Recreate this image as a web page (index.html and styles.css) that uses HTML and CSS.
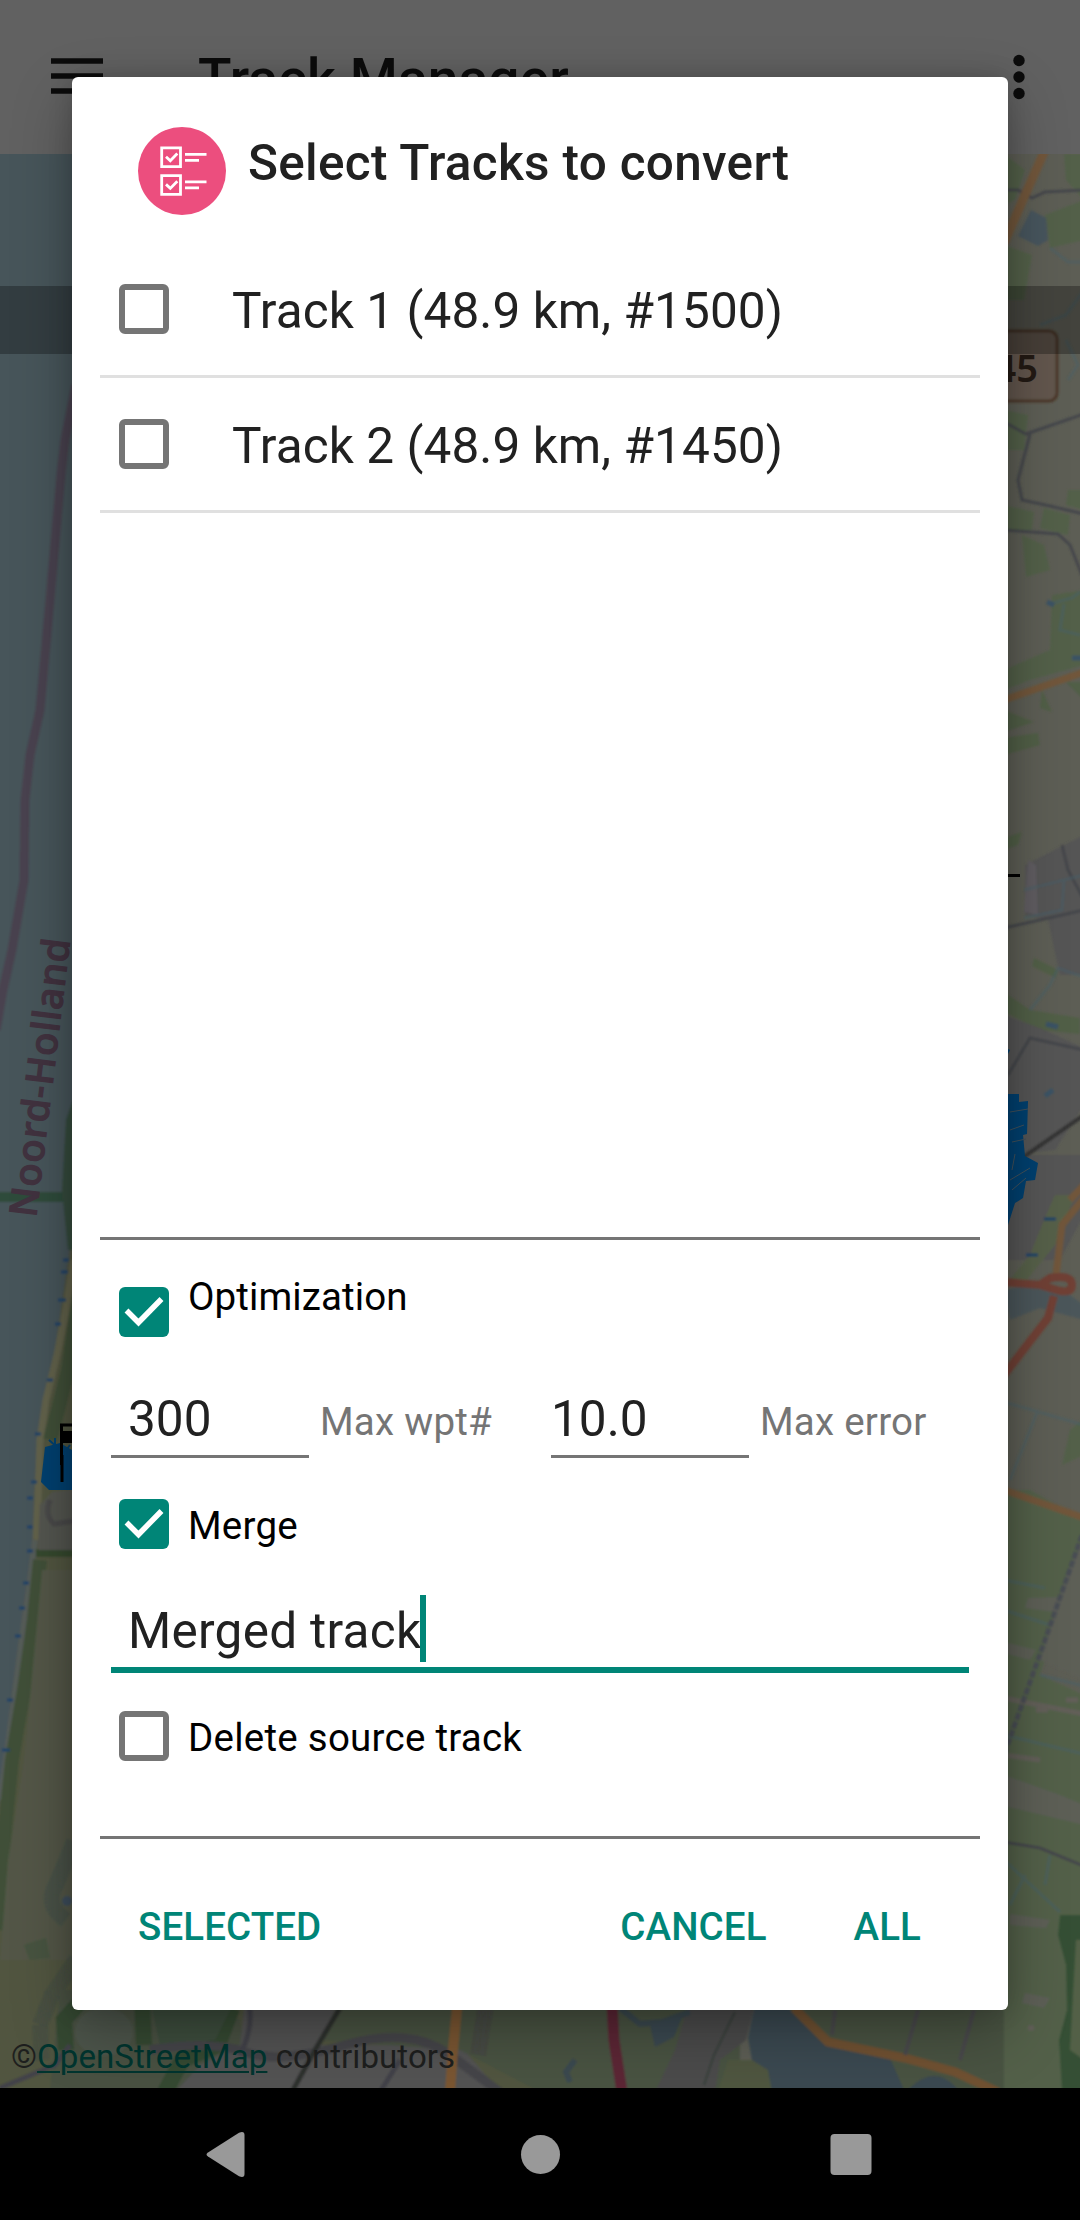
FILE: index.html
```html
<!DOCTYPE html>
<html lang="en">
<head>
<meta charset="utf-8">
<title>Track Manager</title>
<link rel="stylesheet" href="styles.css">
</head>
<body>
<div class="screen">
  <div class="app">
    <header class="appbar">
      <svg class="menu-icon" viewBox="0 0 52 36"><path d="M0 3h52M0 18h52M0 33h52"/></svg>
      <h1 class="app-title">Track Manager</h1>
      <svg class="more-icon" viewBox="0 0 12 46"><circle cx="6" cy="6.5" r="5.7"/><circle cx="6" cy="23" r="5.7"/><circle cx="6" cy="39.5" r="5.7"/></svg>
    </header>
    <div class="map">
      <svg class="map-canvas" viewBox="0 154 1080 1934">
        <defs><filter id="soft" x="-5%" y="-5%" width="110%" height="110%"><feGaussianBlur stdDeviation="1.3"/></filter></defs>
        <rect y="154" width="1080" height="1934" fill="#5d5e55"/>
        <g filter="url(#soft)" fill="none">
          <!-- sea and coast -->
          <path fill="#46545a" d="M-5 150H90V1230L70 1250 64 1290 55 1350 43 1400 38 1440 34 1500 33 1550 27 1590 20 1640 10 1720 3 1780-5 1830z"/>
          <path fill="#51553f" d="M80 1230L70 1250 64 1290 55 1350 43 1400 38 1440 34 1500 33 1550 27 1590 20 1640 10 1720 3 1780-5 1830V2100H600V1230z"/>
          <path stroke="#62624c" stroke-width="7" d="M74 1260L66 1310 57 1355 46 1400 40 1440 38 1500 36 1540"/>
          <path stroke="#555b58" stroke-width="6" d="M35 1540L28 1595 21 1645 10 1730 0 1800"/>
          <path stroke="#405038" stroke-width="14" d="M80 1290L68 1370 58 1410 50 1440M40 1560L34 1620 24 1690 12 1760 4 1840-4 1930"/>
          <path stroke="#34492f" stroke-width="8" d="M36 1553H80"/>
          <path fill="#535450" d="M52 1492L80 1488V1550H38L40 1505z"/>
          <path stroke="#484948" stroke-width="5" d="M80 1520L54 1524Q44 1515 50 1500"/>
          <path fill="#525747" d="M42 1570H80V1960H0L8 1860 24 1760z"/>
          <path stroke="#2f4b3b" stroke-width="10" d="M-2 1197H66"/>
          <path fill="#344b3d" d="M80 1080L66 1120 62 1190 68 1250H80z"/>
          <path stroke="#49434f" stroke-width="9" d="M76 385L65 440 61 475 50 600 40 710 30 755 25 800 24 880 12 950 3 990-4 1030"/>
          <path stroke="#424c46" stroke-width="16" stroke-dasharray="2 1" opacity=".75" d="M74 1842L56 1885Q44 1905 66 1920M76 1960L52 1995 40 2025 42 2060"/>
          <ellipse cx="67" cy="1901" rx="5" ry="5" fill="#3c4e5c"/>
          <path fill="#46523f" d="M24 1945L46 1938 50 1958 30 1960z"/>
          <!-- land behind the bottom edge of the dialog -->
          <path fill="#485143" d="M60 1990H180L240 2020 250 2090H50z"/>
          <path stroke="#344a32" stroke-width="16" d="M82 2000L64 2020 66 2050M142 2000L144 2045M232 2008L218 2045 182 2060 165 2092"/>
          <ellipse cx="104" cy="2032" rx="29" ry="24" fill="#4e554b"/>
          <path fill="#3c4e3e" d="M150 2000H235L215 2040 160 2045z"/>
          <path fill="#525253" d="M245 2000H340L320 2045H460L500 2092H175L200 2065 240 2045z"/>
          <path fill="#4a5342" d="M340 2000H740V2092H540L460 2050 320 2040z"/>
          <path stroke="#454549" stroke-width="9" d="M150 2050Q210 2040 245 2052T345 2045 450 2055L500 2092"/>
          <path stroke="#424248" stroke-width="5" d="M248 2000Q255 2025 240 2055M0 2088L55 2065 70 2045M400 2060L380 2092"/>
          <path stroke="#2f302f" stroke-width="5" d="M340 2008L315 2050 293 2090"/>
          <path stroke="#7a5730" stroke-width="10" d="M457 2008L453 2050 450 2092"/>
          <path stroke="#454745" stroke-width="16" stroke-dasharray="2 1" d="M486 2005L478 2055"/>
          <path stroke="#5c2635" stroke-width="11" d="M612 2005L614 2040 622 2092"/>
          <path fill="#4c4c4b" d="M688 2005H755L746 2040 720 2060 715 2092H655L675 2050z"/>
          <path stroke="#3e4241" stroke-width="3" d="M735 2012L714 2055 704 2085"/>
          <path fill="#4f5640" d="M728 2060H780V2092H718z"/>
          <path stroke="#3b4a50" stroke-width="6" d="M620 2008L640 2024 662 2022 690 2012M575 2060L566 2072 570 2082"/>
          <path fill="#4a5342" d="M780 2000H1010V2092H880z"/>
          <path fill="#3b4a51" d="M650 2025L683 2015 674 2037 655 2047zM755 2005H785L825 2045 890 2058 905 2092H772L768 2070 752 2060 748 2038z"/>
          <path fill="#3b4a51" d="M906 2092Q935 2060 960 2092z"/>
          <path stroke="#6f5130" stroke-width="9" d="M794 2008L828 2042 905 2058 955 2072 998 2092"/>
          <path stroke="#484a4c" stroke-width="4" d="M918 2010L905 2055M974 2010L960 2060M835 2010L832 2035"/>
          <!-- fields, villages and roads on the east side -->
          <path fill="#53614a" d="M1004 154L1025 170 1015 200 1004 205zM1064 154H1084V200L1066 180zM1045 215L1084 200V240L1050 248zM1004 245L1032 255 1024 300H1004zM1004 410L1028 415 1024 450H1004zM1068 490H1084V510L1066 505zM1004 505L1034 512 1032 530H1004zM1044 508L1070 515 1068 535 1040 528zM1022 535L1044 545 1050 570 1026 577zM1052 595L1084 590V665L1030 680 1004 690V670L1050 650z"/>
          <path fill="#515f46" d="M1004 710L1034 722 1004 732zM1042 690L1052 712 1040 708zM1066 682H1084V700zM1004 738L1038 733 1040 745 1004 755zM1004 838L1022 832 1018 845 1004 850zM1034 958L1058 970 1056 978 1032 966zM1004 992L1030 1010 1080 1018V1034L1040 1030 1004 1012z"/>
          <path fill="#555555" d="M1025 865L1084 835V975H1060L1048 920 1025 915zM1004 1015L1040 1028 1084 1048V1105L1055 1150 1004 1155zM1004 1155H1084V1215L1060 1260H1004z"/>
          <path fill="#5f5c60" d="M1028 860L1036 865 1038 915 1024 912z"/>
          <path fill="#57614a" d="M1044 1220L1055 1195 1075 1195 1055 1245 1025 1282H1008L1030 1255z"/>
          <path fill="#4c565a" d="M1004 1290L1030 1285 1070 1295 1084 1305V1320L1040 1308 1010 1320z"/>
          <path fill="#53614a" d="M1070 1430L1084 1418V1455L1062 1465zM1004 1490H1030L1084 1520V1650L1045 1660 1040 1675 1084 1695V2092H1004z"/>
          <path fill="#5d5f57" d="M1084 1540L1068 1570 1040 1660 1084 1680zM1028 1598L1060 1597 1055 1612 1025 1608zM1004 1642L1036 1650 1030 1660 1004 1653zM1004 1775L1060 1795 1084 1805V1825L1030 1812 1004 1806zM1010 1914L1050 1920 1046 1928 1010 1925zM1025 1993L1050 1998 1044 2008 1022 2003z"/>
          <path stroke="#625e59" stroke-width="5" d="M1004 1698L1084 1714M1004 1755L1040 1760M1036 1710H1048M1066 1700H1078M1028 2028H1034"/>
          <path fill="#355035" d="M1060 1915H1084V2092H1062L1059 2040 1067 2010 1066 1965 1058 1935z"/>
          <path fill="#526047" d="M1076 1940H1084V2060L1070 2050z"/>
          <path stroke="#45464b" stroke-width="3" d="M1004 190H1018L1032 198 1045 192 1084 190M1004 422L1026 434 1084 414M1030 434L1018 480 1022 500 1050 506 1084 514M1004 530L1058 534 1070 545 1084 580M1004 928L1040 920 1084 910M1062 845L1068 870 1084 900M1008 1075L1030 1038 1084 1050M1004 1842L1040 1848 1084 1866"/>
          <path stroke="#486069" stroke-width="3" opacity=".5" d="M1050 248L1068 262 1084 262M1066 340L1078 365 1068 380M1040 325L1066 315 1084 290M1050 604L1072 598 1080 592M1064 604L1060 630 1080 635M1024 890L1084 875M1064 880L1062 910 1024 918M1084 977L1058 968 1050 985 1030 1010M1004 1402L1084 1425M1038 1410L1010 1480M1004 1610L1050 1625M1040 1675L1084 1686M1004 1735L1084 1754M1004 1860L1060 1912M1025 1875L1010 1905M1050 1855L1045 1885M1004 1580L1045 1588"/>
          <path fill="#46555d" d="M1031 210L1046 218 1048 240 1038 246 1018 236z"/>
          <path stroke="#3b5265" stroke-width="5" d="M1047 602L1054 605M1072 658H1084M1046 1024L1058 1027M1045 1096L1053 1090"/>
          <path stroke="#71563a" stroke-width="9" d="M1045 150L1025 195 1004 243"/>
          <path stroke="#71563a" stroke-width="7" d="M1004 700L1084 672M1004 1490L1084 1518M1056 1275L1062 1225 1084 1198M1070 1200L1084 1185"/>
          <path stroke="#703f34" stroke-width="8" d="M1004 1282L1040 1285 1050 1278Q1072 1274 1072 1285T1050 1288L1040 1285M1054 1296L1048 1318 1004 1375"/>
          <path stroke="#343434" stroke-width="4" d="M1022 1158L1084 1115"/>
          <path stroke="#494d52" stroke-width="5" stroke-dasharray="7 2" d="M1082 1535L1045 1640 1004 1755"/>
          <path stroke="#1c4368" stroke-width="3" d="M63 1260H69M61 1272H68M58 1300H66M55 1324H61M47 1380H53M35 1434H41M31 1482H37M27 1498H33M27 1527H33M27 1551H33M23 1583H29M19 1608H25M15 1636H21M7 1700H13M2 1750H10M1044 1219H1056M1026 1255H1038"/>
          <rect x="930" y="331" width="127" height="70" rx="8" fill="#62564d" stroke="#4b3729" stroke-width="3"/>
        </g>
        <text class="road-number" x="1038" y="382">N245</text>
        <text class="province" transform="translate(36 1218) rotate(-83)" textLength="280">Noord-Holland</text>
        <!-- recorded track -->
        <path fill="#00406f" d="M45 1447L60 1443 72 1450V1490H49L41 1482zM1008 1094H1019V1102L1028 1101 1027 1134 1023 1135 1025 1156 1038 1163 1035 1180 1026 1181 1023 1198 1015 1203 1008 1225zM1008 1049L1010 1050 1008 1054z"/>
        <path stroke="#00406f" stroke-width="2" d="M49 1440L58 1448M55 1438V1450M64 1441L56 1449M70 1445L60 1458"/>
        <path stroke="#42505a" stroke-width="1" d="M1010 1130L1024 1125M1012 1142L1026 1139M1010 1112L1028 1109M1010 1180L1030 1168M1012 1190L1026 1178M1015 1154L1012 1170"/>
        <path fill="none" stroke="#000" stroke-width="3" d="M61.500 1465V1425H75M62 1455V1482M1006 875.500H1020"/>
        <path fill="#000" d="M62 1431H73V1443H62z"/>
        <rect y="286" width="1080" height="68" fill="#000" opacity=".28"/>
      </svg>
      <p class="attribution">©<a class="osm-link">OpenStreetMap</a> contributors</p>
    </div>
  </div>

  <main class="dialog">
    <div class="dialog-head">
      <svg class="list-icon" viewBox="0 0 88 88">
        <circle cx="44" cy="44" r="44" fill="#ec4e7e"/>
        <g fill="none" stroke="#fff">
          <path stroke-width="2.800" d="M23.700 20.900h18.800v18.800h-18.800zM23.700 48.600h18.800v18.800h-18.800z"/>
          <path stroke-width="2.800" d="M28 29.800l4.300 4 7-7.200M28 57.400l4.300 4 7-7.200M47 27.300h21.500M47 33.400h14M47 54.800h21.500M47 60.900h14"/>
        </g>
      </svg>
      <h2 class="dialog-title">Select Tracks to convert</h2>
    </div>
    <ul class="tracks">
      <li class="track"><span class="box"></span><span class="track-name">Track 1 (48.9 km, #1500)</span></li>
      <li class="track"><span class="box"></span><span class="track-name">Track 2 (48.9 km, #1450)</span></li>
    </ul>
    <section class="options">
      <div class="option option-first">
        <span class="box box-on"><svg viewBox="0 0 50 50"><path d="M7.500 23.500L19.500 35.500 42.500 12"/></svg></span>
        <span class="option-label">Optimization</span>
      </div>
      <div class="limits">
        <span class="field field-short">300</span><span class="hint">Max wpt#</span>
        <span class="field field-flush">10.0</span><span class="hint">Max error</span>
      </div>
      <div class="option">
        <span class="box box-on"><svg viewBox="0 0 50 50"><path d="M7.500 23.500L19.500 35.500 42.500 12"/></svg></span>
        <span class="option-label">Merge</span>
      </div>
      <div class="field field-name"><span class="name-text">Merged track</span><span class="caret"></span></div>
      <div class="option option-last">
        <span class="box"></span>
        <span class="option-label">Delete source track</span>
      </div>
    </section>
    <footer class="actions">
      <span class="action">SELECTED</span>
      <span class="action action-cancel">CANCEL</span>
      <span class="action">ALL</span>
    </footer>
  </main>

  <nav class="navbar">
    <svg class="nav-icon" viewBox="0 0 60 60"><path d="M9 28.500Q6 30.500 9 32.500L40 52.300Q45.500 54.500 45.500 50V11Q45.500 6.500 40 8.700z"/></svg>
    <svg class="nav-icon" viewBox="0 0 60 60"><circle cx="30.500" cy="30.500" r="19.500"/></svg>
    <svg class="nav-icon" viewBox="0 0 60 60"><rect x="9.500" y="10" width="41" height="41" rx="4"/></svg>
  </nav>
</div>
</body>
</html>
```
FILE: styles.css
```css
* { box-sizing: border-box; }
body { margin: 0; font-family: Roboto, "Liberation Sans", sans-serif; }
h1, h2, p, ul { margin: 0; padding: 0; font-weight: 500; }
svg { display: block; }

.screen {
  display: grid;
  grid-template: 2088px 132px / 1080px;
  overflow: hidden;
}

.app { grid-area: 1 / 1; display: flex; flex-direction: column; overflow: hidden; }
.appbar {
  height: 154px;
  padding-left: 51px;
  display: flex;
  align-items: center;
  background: #616161;
  color: #0c0c0c;
}
.menu-icon { width: 52px; height: 36px; margin-top: -2px; fill: none; stroke: #0c0c0c; stroke-width: 5.5; }
.app-title { margin-left: 95px; font-size: 55px; line-height: 64px; padding-top: 4px; letter-spacing: .15px; }
.more-icon { width: 12px; height: 46px; margin: 0 55px 0 auto; fill: #0c0c0c; }

.map { flex: 1; display: grid; }
.map-canvas { grid-area: 1 / 1; width: 1080px; height: 1934px; }
.road-number {
  font: 600 38px "Noto Sans", sans-serif;
  fill: #231a14;
  text-anchor: end;
}
.province { font: 500 38px "Noto Sans", sans-serif; fill: #41323f; stroke: #41323f; stroke-width: 1.2; }
.attribution {
  grid-area: 1 / 1;
  align-self: end;
  padding: 0 0 11px 11px;
  font-size: 33px;
  line-height: 40px;
  font-weight: 400;
  letter-spacing: .08px;
  color: #1e1f1e;
}
.osm-link {
  color: #00352f;
  text-decoration: underline;
  text-decoration-thickness: 2px;
  text-underline-offset: 3px;
}

.dialog {
  grid-area: 1 / 1;
  z-index: 1;
  width: 936px;
  height: 1933px;
  margin: 77px 0 0 72px;
  padding: 50px 28px 0;
  display: flex;
  flex-direction: column;
  border-radius: 6px;
  background: #fff;
  color: #212121;
  box-shadow: 0 22px 60px rgba(0, 0, 0, .28), 0 0 24px rgba(0, 0, 0, .16);
}
.dialog-head { height: 116px; padding-left: 38px; display: flex; gap: 22px; }
.list-icon { width: 88px; height: 88px; }
.dialog-title { font-size: 49.5px; line-height: 58px; padding-top: 7px; letter-spacing: .3px; }

.tracks { height: 994px; list-style: none; font-size: 49.5px; font-weight: 400; }
.track {
  height: 135px;
  padding: 0 0 1px 19px;
  display: flex;
  align-items: center;
  gap: 63px;
  border-bottom: 3px solid #e0e0e0;
}
.track-name { padding-top: 4px; letter-spacing: .08px; }
.box {
  flex: none;
  width: 50px;
  height: 50px;
  border: 6px solid #757575;
  border-radius: 6px;
}
.box-on { border: 0; background: #008577; }
.box-on svg { width: 50px; height: 50px; fill: none; stroke: #fff; stroke-width: 5.5; }

.options {
  height: 602px;
  padding: 47px 11px 0;
  border: solid #757575;
  border-width: 3px 0;
}
.option { display: flex; gap: 19px; padding-left: 8px; color: #000; }
.option-label { font-size: 38.5px; line-height: 46px; padding-top: 4px; letter-spacing: .25px; }
.option-first { height: 50px; }
.option-first .option-label { padding-top: 0; margin-top: -13px; letter-spacing: .1px; }
.limits {
  height: 121px;
  padding-top: 50px;
  display: grid;
  grid-template-columns: 198px 242px 198px 242px;
  align-items: start;
}
.limits + .option { height: 50px; margin-top: 41px; }
.field { font-size: 49.5px; line-height: 60px; }
.field-short, .field-flush { height: 71px; padding-top: 2px; border-bottom: 3px solid #757575; }
.field-short { padding-left: 17px; }
.hint {
  padding: 12px 0 0 11px;
  font-size: 38.5px;
  line-height: 46px;
  letter-spacing: .25px;
  color: #757575;
  white-space: nowrap;
}
.field-name {
  height: 78px;
  margin-top: 46px;
  padding-left: 17px;
  display: flex;
  border-bottom: 6px solid #008577;
}
.name-text { padding-top: 6px; letter-spacing: .28px; }
.caret { width: 6px; height: 67px; background: #008577; margin-left: -1px; }
.option-last { margin-top: 38px; }

.actions {
  padding: 63px 59px 0 38px;
  display: flex;
  font-size: 38.5px;
  line-height: 50px;
  font-weight: 500;
  letter-spacing: .1px;
  color: #008577;
}
.action-cancel { margin: 0 87px 0 auto; }

.navbar {
  grid-area: 2 / 1;
  display: flex;
  justify-content: space-between;
  padding: 36px 199px;
  background: #000;
}
.nav-icon { width: 60px; height: 60px; fill: #999; }
```
